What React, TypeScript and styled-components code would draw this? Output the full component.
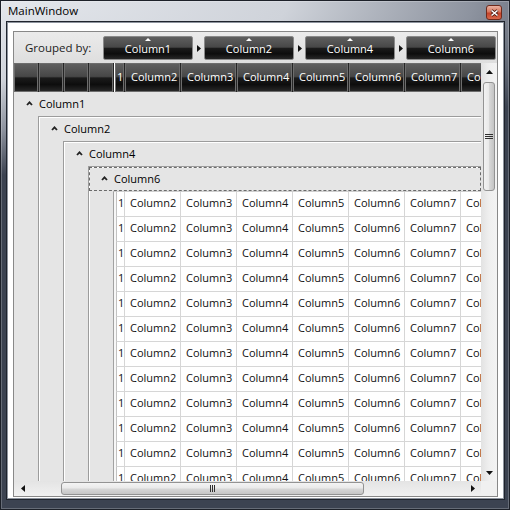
import React from "react";
import styled, { createGlobalStyle, css } from "styled-components";

const GlobalStyle = createGlobalStyle`
  * { box-sizing: border-box; }
  html, body {
    margin: 0;
    padding: 0;
    background: #fff;
  }
  body {
    font-family: "Segoe UI", "Open Sans", "Liberation Sans", sans-serif;
    font-size: 11px;
    color: #111;
  }
`;

const groupedBy = ["Column1", "Column2", "Column4", "Column6"];
const columns = ["Column2", "Column3", "Column4", "Column5", "Column6", "Column7", "Column8"];
const rowCount = 12;

const darkGloss = css`
  background: linear-gradient(
    to bottom,
    #5f5f5f 0%,
    #474747 46%,
    #1b1b1b 52%,
    #0d0d0d 76%,
    #272727 100%
  );
`;

const Window = styled.div`
  width: 510px;
  height: 510px;
  overflow: hidden;
  display: flex;
  flex-direction: column;
  padding: 0 6px 11px 7px;
  background: radial-gradient(
      ellipse 640px 175px at 0 0,
      #e4e7ec 0%,
      #cfd3da 45%,
      #8d939f 74%,
      #3c4351 100%
    ),
    #323845;
  box-shadow: inset 0 0 0 1px #1d2129, inset 0 0 0 2px rgba(255, 255, 255, 0.22);
`;

const TitleBar = styled.div`
  flex: none;
  height: 22px;
  display: flex;
  align-items: center;
  justify-content: space-between;
`;

const Title = styled.span`
  margin-left: 1px;
  padding-bottom: 1px;
  font-size: 11.5px;
  color: #000;
`;

const CloseButton = styled.div`
  align-self: flex-start;
  margin-top: 5px;
  margin-right: 2px;
  width: 16px;
  height: 15px;
  border: 1px solid #6e2a1c;
  border-radius: 3px;
  background: linear-gradient(to bottom, #eab2a2 0%, #d8765c 45%, #c4432a 55%, #d8694c 100%);
  display: flex;
  align-items: center;
  justify-content: center;
`;

const Client = styled.div`
  flex: 1;
  min-height: 0;
  overflow: hidden;
  display: flex;
  background: #fff;
  border: 1px solid #8e949e;
  box-shadow: 0 0 0 1px #1f242d;
  padding: 8px 5px 1px 5px;
`;

const Grid = styled.div`
  flex: 1;
  min-height: 0;
  display: flex;
  flex-direction: column;
  border: 1px solid #888;
  overflow: hidden;
  background: #fff;
`;

const GroupPanel = styled.div`
  flex: none;
  height: 31px;
  display: flex;
  align-items: flex-start;
  padding: 4px 0 0 11px;
  background: linear-gradient(to bottom, #ebebeb, #dedede);
`;

const GroupLabel = styled.span`
  width: 78px;
  height: 24px;
  display: flex;
  align-items: center;
  padding-bottom: 1px;
  font-size: 11.5px;
  color: #222;
`;

const GroupChip = styled.div`
  position: relative;
  flex: none;
  width: 90px;
  height: 24px;
  border: 1px solid #8a8a8a;
  border-radius: 2px;
  ${darkGloss};
  color: #fff;
  display: flex;
  align-items: center;
  justify-content: center;
  padding-top: 1px;

  &::before {
    content: "";
    position: absolute;
    top: 1px;
    left: 50%;
    transform: translateX(-50%);
    border-left: 3px solid transparent;
    border-right: 3px solid transparent;
    border-bottom: 3px solid #fff;
  }
`;

const ChipSeparator = styled.div`
  flex: none;
  width: 11px;
  height: 24px;
  display: flex;
  align-items: center;
  justify-content: center;
`;

const Surface = styled.div`
  flex: 1;
  min-height: 0;
  display: grid;
  grid-template-columns: 467px 16px;
  grid-template-rows: 29px minmax(0, 1fr) 15px;
`;

const HeaderRow = styled.div`
  display: flex;
  background: #262626;
  overflow: hidden;
`;

const HeadCell = styled.div<{ $w: number; $pad?: number }>`
  flex: none;
  width: ${(p) => p.$w}px;
  margin-right: 1px;
  border: 1px solid #6d6d6d;
  ${darkGloss};
  color: #fff;
  display: flex;
  align-items: center;
  padding: 0 0 2px ${(p) => p.$pad ?? 5}px;
  white-space: nowrap;
  overflow: hidden;
`;

const FrozenLine = styled.div`
  flex: none;
  width: 1px;
  background: #fff;
`;

const Body = styled.div`
  overflow: hidden;
  background: #e5e5e5;
  min-height: 0;
`;

const GroupBox = styled.div<{ $nested: boolean }>`
  background: #e5e5e5;
  ${(p) =>
    p.$nested &&
    css`
      border-left: 1px solid #9c9c9c;
      border-top: 1px solid #9c9c9c;
      box-shadow: inset 1px 1px 0 #fff;
    `}
`;

const GroupHeader = styled.div<{ $focused: boolean }>`
  height: 24px;
  display: flex;
  align-items: center;
  gap: 6px;
  padding: 0 0 2px 12px;
  color: #000;
  ${(p) =>
    p.$focused &&
    css`
      outline: 1px dashed #6a6a6a;
      outline-offset: -1px;
    `}
`;

const GroupContent = styled.div`
  margin-left: 24px;
`;

const DataBlock = styled.div`
  border-left: 1px solid #a2a2a2;
  border-top: 1px solid #cfcfcf;
  padding-left: 2px;
  background: #f7f7f7;
`;

const DataRow = styled.div`
  display: flex;
  height: 25px;
  border-left: 1px solid #c2c2c2;
  border-bottom: 1px solid #d6d6d6;
  background: #fff;
`;

const Cell = styled.div<{ $w: number; $pad?: number }>`
  flex: none;
  width: ${(p) => p.$w}px;
  padding: 0 0 3px ${(p) => p.$pad ?? 5}px;
  border-right: 1px solid #d6d6d6;
  display: flex;
  align-items: center;
  white-space: nowrap;
  overflow: hidden;
  color: #111;
`;

const VScroll = styled.div`
  grid-column: 2;
  grid-row: 1 / 3;
  display: flex;
  flex-direction: column;
  background: linear-gradient(to right, #e2e2e2, #efefef 50%, #f3f3f3);
`;

const HScroll = styled.div`
  grid-column: 1;
  grid-row: 3;
  display: flex;
  background: linear-gradient(to bottom, #e4e4e4, #f1f1f1);
`;

const Corner = styled.div`
  grid-column: 2;
  grid-row: 3;
  background: #f0f0f0;
`;

const ArrowButton = styled.div<{ $vertical?: boolean }>`
  flex: none;
  ${(p) => (p.$vertical ? "height: 17px;" : "width: 17px;")}
  display: flex;
  align-items: center;
  justify-content: center;
`;

const Track = styled.div<{ $vertical?: boolean }>`
  flex: 1;
  display: flex;
  flex-direction: ${(p) => (p.$vertical ? "column" : "row")};
  ${(p) => (p.$vertical ? "padding-top: 2px;" : "padding-left: 30px;")}
`;

const Thumb = styled.div<{ $vertical?: boolean }>`
  flex: none;
  border: 1px solid #939393;
  border-radius: 3px;
  display: flex;
  align-items: center;
  justify-content: center;
  ${(p) =>
    p.$vertical
      ? css`
          width: 12px;
          height: 109px;
          margin: 0 auto;
          flex-direction: column;
          gap: 1px;
          background: linear-gradient(to right, #f2f2f2 0%, #e9e9e9 48%, #d8d8d8 52%, #c4c4c4 100%);
        `
      : css`
          width: 303px;
          height: 13px;
          margin-top: 1px;
          gap: 1px;
          background: linear-gradient(to bottom, #f4f4f4 0%, #e9e9e9 48%, #d8d8d8 52%, #c6c6c6 100%);
        `}
`;

const GripLine = styled.div<{ $vertical?: boolean }>`
  background: #2f2f2f;
  ${(p) => (p.$vertical ? "width: 8px; height: 1px;" : "width: 1px; height: 7px;")}
`;

const Chevron = () => (
  <svg width="7" height="5" viewBox="0 0 7 5">
    <path d="M1 4 L3.5 1.3 L6 4" fill="none" stroke="#222" strokeWidth="1.8" />
  </svg>
);

const Arrow = ({ dir }: { dir: "up" | "down" | "left" | "right" }) => {
  const paths = {
    up: "M0 4 L3.5 0 L7 4 Z",
    down: "M0 0 L7 0 L3.5 4 Z",
    left: "M4 0 L4 7 L0 3.5 Z",
    right: "M0 0 L4 3.5 L0 7 Z",
  };
  const wide = dir === "up" || dir === "down";
  return (
    <svg width={wide ? 7 : 4} height={wide ? 4 : 7} viewBox={wide ? "0 0 7 4" : "0 0 4 7"}>
      <path d={paths[dir]} fill="#111" />
    </svg>
  );
};

function Grip({ vertical }: { vertical?: boolean }) {
  return (
    <>
      <GripLine $vertical={vertical} />
      <GripLine $vertical={vertical} />
      <GripLine $vertical={vertical} />
    </>
  );
}

function Rows() {
  return (
    <DataBlock>
      {Array.from({ length: rowCount }, (_, i) => (
        <DataRow key={i}>
          <Cell $w={8} $pad={1}>
            1
          </Cell>
          {columns.map((c) => (
            <Cell key={c} $w={56}>
              {c}
            </Cell>
          ))}
        </DataRow>
      ))}
    </DataBlock>
  );
}

function GroupLevel({ names, depth }: { names: string[]; depth: number }) {
  const [name, ...rest] = names;
  return (
    <GroupBox $nested={depth > 0}>
      <GroupHeader $focused={rest.length === 0}>
        <Chevron />
        <span>{name}</span>
      </GroupHeader>
      <GroupContent>
        {rest.length ? <GroupLevel names={rest} depth={depth + 1} /> : <Rows />}
      </GroupContent>
    </GroupBox>
  );
}

export default function App() {
  return (
    <>
      <GlobalStyle />
      <Window>
        <TitleBar>
          <Title>MainWindow</Title>
          <CloseButton>
            <svg width="9" height="8" viewBox="0 0 9 8">
              <path d="M1.5 1.5 L7.5 6.5 M7.5 1.5 L1.5 6.5" stroke="#4a1a10" strokeWidth="3" />
              <path d="M1.5 1.5 L7.5 6.5 M7.5 1.5 L1.5 6.5" stroke="#fff" strokeWidth="1.6" />
            </svg>
          </CloseButton>
        </TitleBar>
        <Client>
          <Grid>
            <GroupPanel>
              <GroupLabel>Grouped by:</GroupLabel>
              {groupedBy.map((g, i) => (
                <React.Fragment key={g}>
                  {i > 0 && (
                    <ChipSeparator>
                      <Arrow dir="right" />
                    </ChipSeparator>
                  )}
                  <GroupChip>{g}</GroupChip>
                </React.Fragment>
              ))}
            </GroupPanel>
            <Surface>
              <HeaderRow>
                {groupedBy.map((g) => (
                  <HeadCell key={g} $w={24} />
                ))}
                <FrozenLine />
                <HeadCell $w={9} $pad={1}>
                  1
                </HeadCell>
                {columns.map((c) => (
                  <HeadCell key={c} $w={55}>
                    {c}
                  </HeadCell>
                ))}
              </HeaderRow>
              <Body>
                <GroupLevel names={groupedBy} depth={0} />
              </Body>
              <VScroll>
                <ArrowButton $vertical>
                  <Arrow dir="up" />
                </ArrowButton>
                <Track $vertical>
                  <Thumb $vertical>
                    <Grip vertical />
                  </Thumb>
                </Track>
                <ArrowButton $vertical>
                  <Arrow dir="down" />
                </ArrowButton>
              </VScroll>
              <HScroll>
                <ArrowButton>
                  <Arrow dir="left" />
                </ArrowButton>
                <Track>
                  <Thumb>
                    <Grip />
                  </Thumb>
                </Track>
                <ArrowButton>
                  <Arrow dir="right" />
                </ArrowButton>
              </HScroll>
              <Corner />
            </Surface>
          </Grid>
        </Client>
      </Window>
    </>
  );
}
